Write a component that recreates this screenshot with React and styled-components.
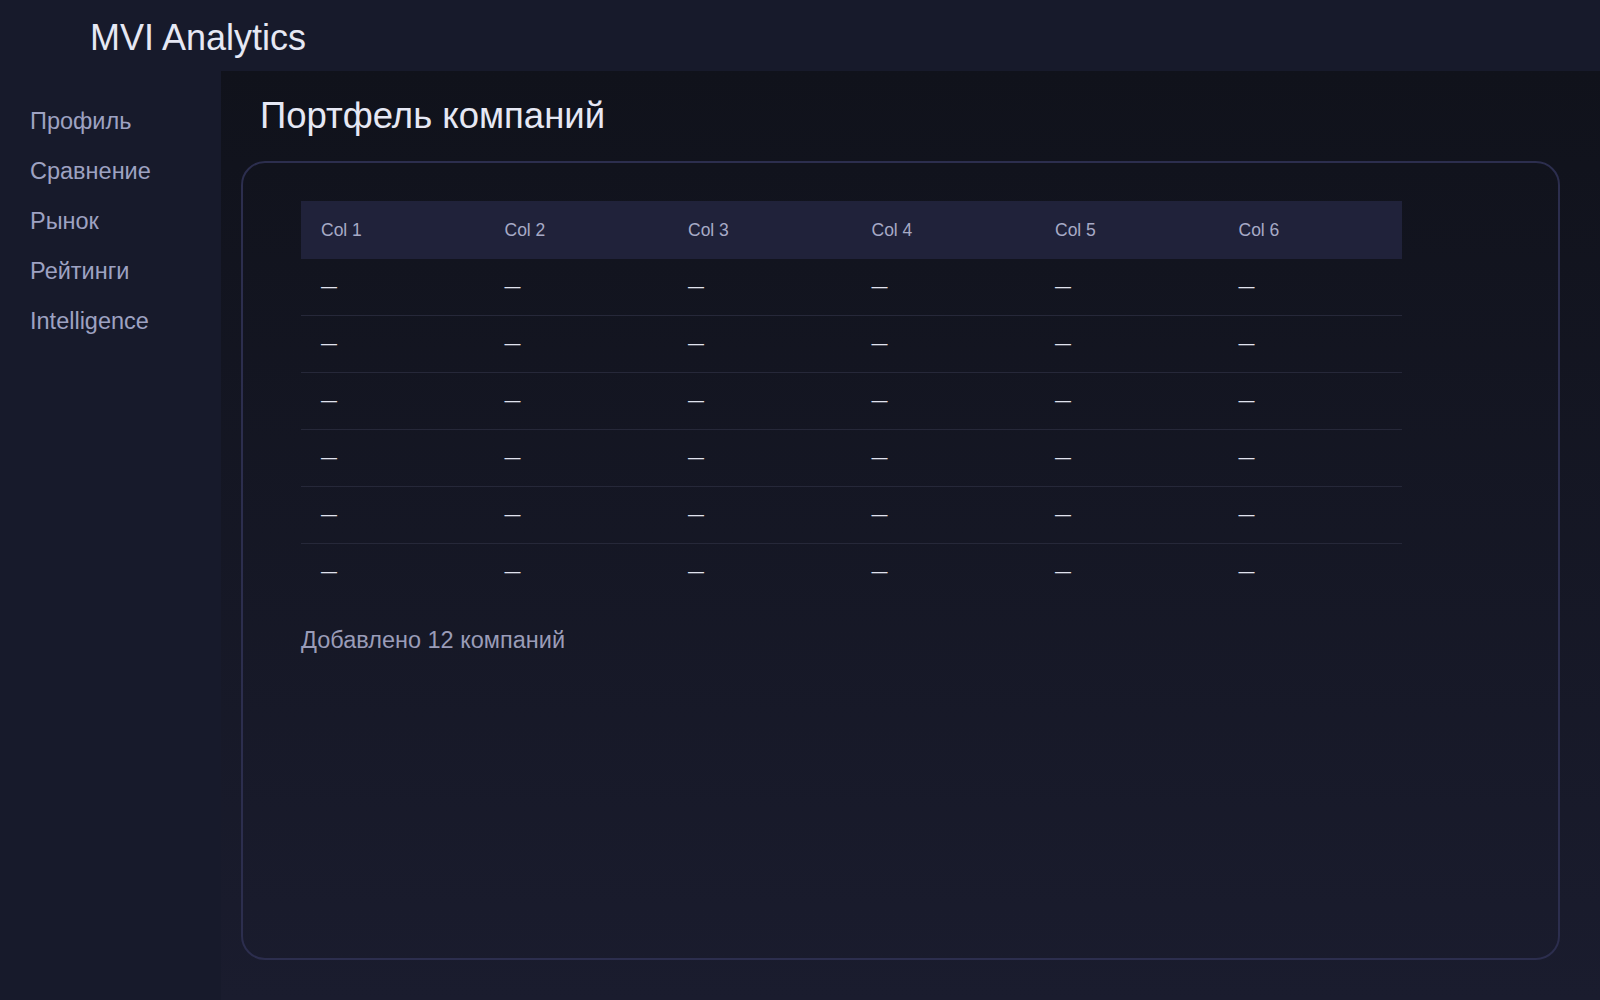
import React from "react";
import styled, { createGlobalStyle } from "styled-components";

const GlobalStyle = createGlobalStyle`
  html, body { margin: 0; height: 100%; }
  body { font-family: "Liberation Sans", Arial, sans-serif; background: #171a2b; }
`;

const navItems = ["Профиль", "Сравнение", "Рынок", "Рейтинги", "Intelligence"];
const cols = ["Col 1", "Col 2", "Col 3", "Col 4", "Col 5", "Col 6"];
const rows = [0, 1, 2, 3, 4, 5];

const App = () => (
  <Page>
    <GlobalStyle />
    <Header>
      <Logo>MVI Analytics</Logo>
    </Header>
    <Body>
      <Sidebar>
        {navItems.map((n) => (
          <NavItem key={n}>{n}</NavItem>
        ))}
      </Sidebar>
      <Main>
        <Title>Портфель компаний</Title>
        <Card>
          <Table>
            <thead>
              <tr>
                {cols.map((c) => (
                  <Th key={c}>{c}</Th>
                ))}
              </tr>
            </thead>
            <tbody>
              {rows.map((r) => (
                <Tr key={r} $last={r === rows.length - 1}>
                  {cols.map((c) => (
                    <Td key={c}>—</Td>
                  ))}
                </Tr>
              ))}
            </tbody>
          </Table>
          <Footer>Добавлено 12 компаний</Footer>
        </Card>
      </Main>
    </Body>
  </Page>
);

const Page = styled.div`
  display: flex;
  flex-direction: column;
  height: 1000px;
`;

const Header = styled.header`
  height: 71px;
  flex-shrink: 0;
  background: #171a2b;
  display: flex;
  align-items: center;
  padding-left: 90px;
`;

const Logo = styled.div`
  font-size: 36px;
  color: #e6e8f4;
  margin-top: 4px;
`;

const Body = styled.div`
  flex: 1;
  display: flex;
  min-height: 0;
`;

const Sidebar = styled.nav`
  width: 221px;
  flex-shrink: 0;
  background: #171a2b;
  padding: 38px 0 0 30px;
  box-sizing: border-box;
  display: flex;
  flex-direction: column;
  gap: 25px;
`;

const NavItem = styled.div`
  font-size: 23.5px;
  line-height: 25px;
  color: #9ea2c2;
`;

const Main = styled.main`
  flex: 1;
  background: linear-gradient(180deg, #10121b 0%, #1a1c2e 100%);
  padding: 22px 40px 40px 20px;
  box-sizing: border-box;
  display: flex;
  flex-direction: column;
`;

const Title = styled.h1`
  margin: 0 0 22px 19px;
  font-weight: 400;
  font-size: 36.5px;
  line-height: 46px;
  color: #e6e8f4;
`;

const Card = styled.section`
  flex: 1;
  border: 2px solid #2c2e4e;
  border-radius: 24px;
  padding: 38px 58px;
`;

const Table = styled.table`
  border-collapse: collapse;
  width: 1101px;
`;

const Th = styled.th`
  background: #20223a;
  height: 58px;
  text-align: left;
  font-weight: 400;
  font-size: 17.5px;
  color: #a7aac6;
  padding: 0 20px;
  width: 183px;
  box-sizing: border-box;
`;

const Tr = styled.tr`
  border-bottom: 1px solid ${(p) => (p.$last ? "transparent" : "#262839")};
`;

const Td = styled.td`
  height: 56px;
  padding: 0 20px;
  font-size: 16px;
  color: #e0e2ee;
`;

const Footer = styled.div`
  margin-top: 26px;
  font-size: 23.5px;
  color: #9a9cb8;
`;

export default App;
